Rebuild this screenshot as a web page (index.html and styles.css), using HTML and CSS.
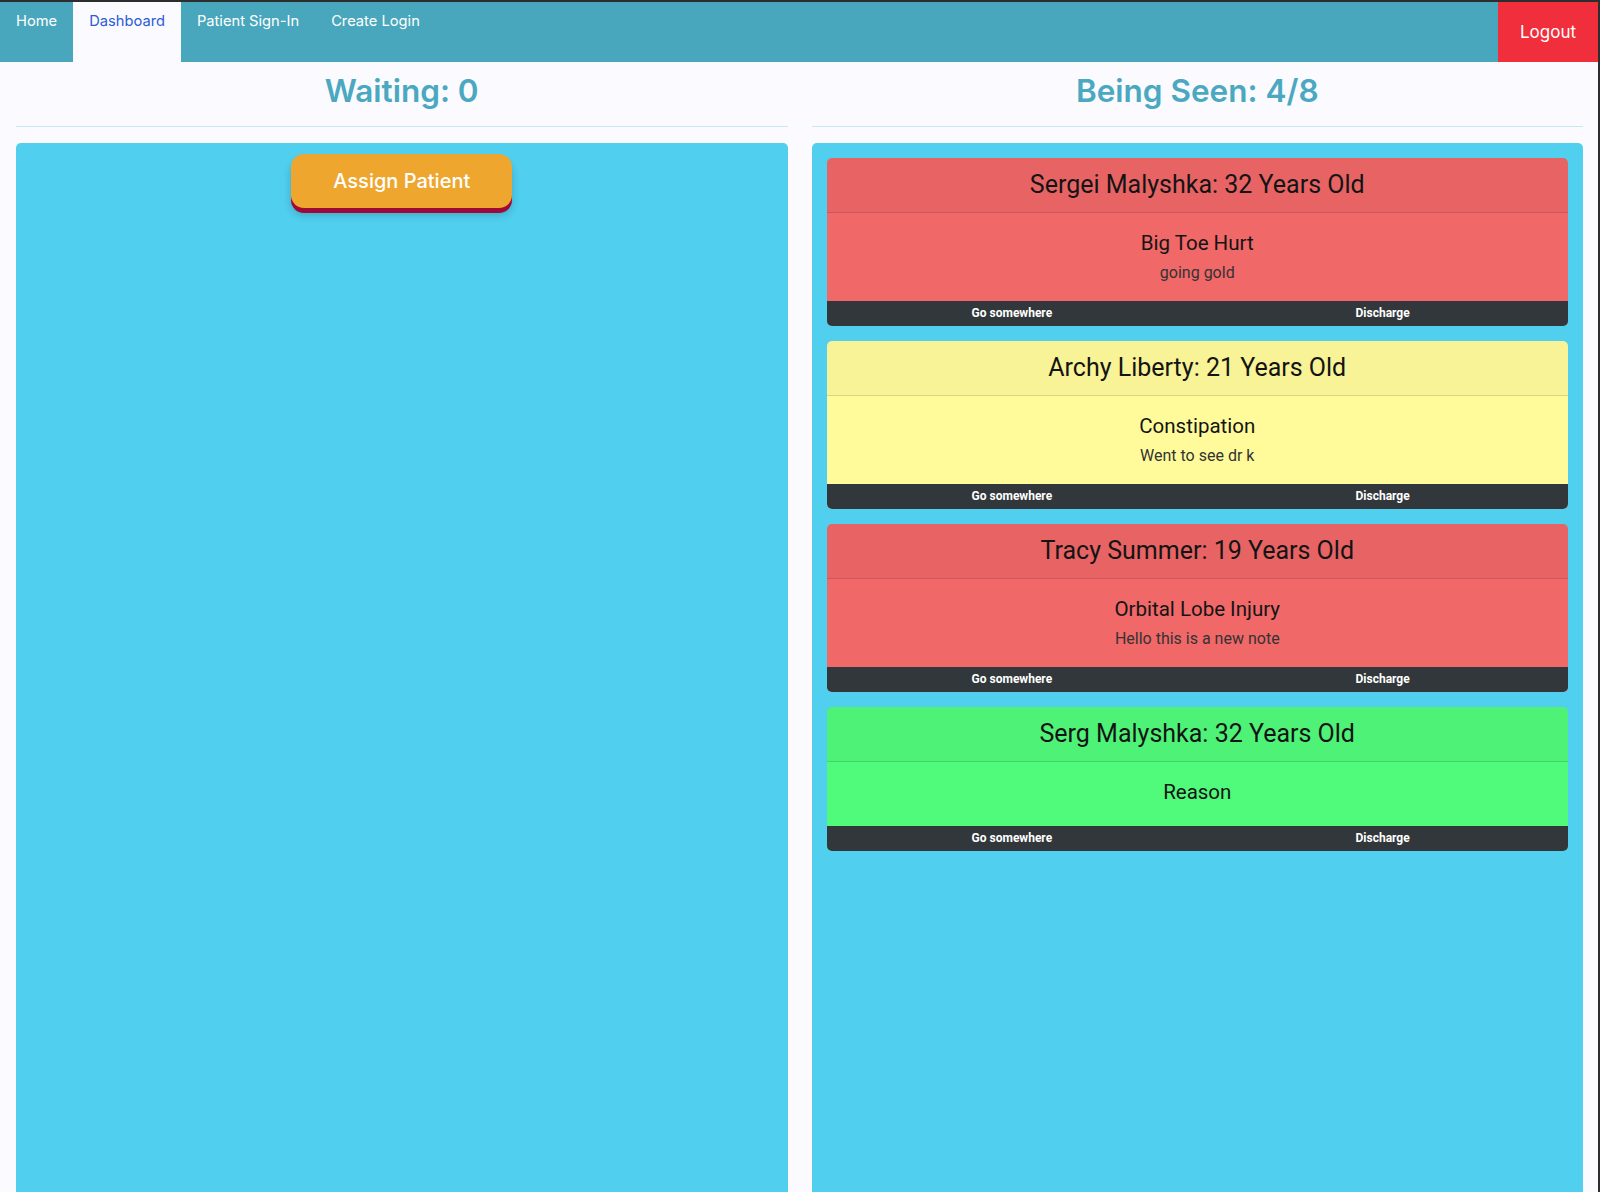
FILE: index.html
```html
<!DOCTYPE html>
<html lang="en">
<head>
<meta charset="utf-8">
<title>Dashboard</title>
<link rel="stylesheet" href="styles.css">
</head>
<body>
<nav class="topnav">
  <div class="nav-links">
    <a class="nav-link" href="#">Home</a>
    <a class="nav-link active" href="#">Dashboard</a>
    <a class="nav-link" href="#">Patient Sign-In</a>
    <a class="nav-link" href="#">Create Login</a>
  </div>
  <a class="logout" href="#">Logout</a>
</nav>
<main class="board">
  <section class="col">
    <h2 class="col-title">Waiting: 0</h2>
    <hr class="col-rule">
    <div class="panel panel-waiting">
      <button class="assign-btn" type="button">Assign Patient</button>
    </div>
  </section>
  <section class="col">
    <h2 class="col-title">Being Seen: 4/8</h2>
    <hr class="col-rule">
    <div class="panel panel-seen">
      <div class="card card-red">
        <div class="card-header">Sergei Malyshka: 32 Years Old</div>
        <div class="card-body">
          <h5 class="card-title">Big Toe Hurt</h5>
          <p class="card-text">going gold</p>
        </div>
        <div class="card-footer"><a href="#">Go somewhere</a><a href="#">Discharge</a></div>
      </div>
      <div class="card card-yellow">
        <div class="card-header">Archy Liberty: 21 Years Old</div>
        <div class="card-body">
          <h5 class="card-title">Constipation</h5>
          <p class="card-text">Went to see dr k</p>
        </div>
        <div class="card-footer"><a href="#">Go somewhere</a><a href="#">Discharge</a></div>
      </div>
      <div class="card card-red">
        <div class="card-header">Tracy Summer: 19 Years Old</div>
        <div class="card-body">
          <h5 class="card-title">Orbital Lobe Injury</h5>
          <p class="card-text">Hello this is a new note</p>
        </div>
        <div class="card-footer"><a href="#">Go somewhere</a><a href="#">Discharge</a></div>
      </div>
      <div class="card card-green">
        <div class="card-header">Serg Malyshka: 32 Years Old</div>
        <div class="card-body">
          <h5 class="card-title">Reason</h5>
        </div>
        <div class="card-footer"><a href="#">Go somewhere</a><a href="#">Discharge</a></div>
      </div>
    </div>
  </section>
</main>
</body>
</html>
```
FILE: styles.css
```css
* { box-sizing: border-box; }

html, body { margin: 0; padding: 0; }

body {
  height: 100vh;
  display: flex;
  flex-direction: column;
  background: #fafaff;
  border-top: 2px solid #2b2d2f;
  border-right: 2px solid #2b2d2f;
  font-family: Inter, "Noto Sans", sans-serif;
  overflow: hidden;
}

.topnav {
  height: 60px;
  flex: none;
  display: flex;
  justify-content: space-between;
  background: #49a7bd;
}

.nav-links { display: flex; }

.nav-link {
  display: block;
  height: 60px;
  padding: 10px 16px 0;
  font-size: 14.7px;
  line-height: 18px;
  color: #ffffff;
  text-decoration: none;
}

.nav-link.active {
  background: #fafaff;
  color: #2b5bd6;
}

.logout {
  width: 100px;
  display: flex;
  align-items: center;
  justify-content: center;
  background: #f12e3c;
  color: #ffffff;
  font-size: 17px;
  text-decoration: none;
}

.board {
  flex: 1;
  display: flex;
  gap: 24px;
  padding: 0 15px 0 16px;
  min-height: 0;
}

.col {
  flex: 1;
  min-width: 0;
  display: flex;
  flex-direction: column;
}

.col-title {
  margin: 10px 0 16px;
  font-size: 31.5px;
  line-height: 38px;
  font-weight: 600;
  color: #4aa8c0;
  text-align: center;
}

.col-rule {
  margin: 0 0 16px;
  border: 0;
  border-top: 1px solid #c6e8ee;
}

.panel {
  flex: 1;
  background: #50cfef;
  border-radius: 5px 5px 0 0;
  padding: 15px 15px 0;
}

.panel-waiting { padding-top: 11px; }

.panel-seen {
  display: flex;
  flex-direction: column;
  gap: 15px;
}

.assign-btn {
  display: block;
  margin: 0 auto;
  padding: 15px 42px 14px;
  border: 0;
  border-radius: 13px;
  background: #eea62e;
  color: #ffffff;
  font-family: Inter, "Noto Sans", sans-serif;
  font-size: 20px;
  line-height: 25px;
  font-weight: 500;
  box-shadow: 0 5px 0 #a1083a, 0 7px 8px rgba(0, 0, 0, 0.2);
}

.card {
  border-radius: 5px;
  overflow: hidden;
  font-family: Roboto, "Noto Sans", sans-serif;
  color: #141414;
  text-align: center;
}

.card-red { background: #f06868; }
.card-yellow { background: #fffb9b; }
.card-green { background: #50fa7b; }

.card-header {
  padding: 12px 20px;
  font-size: 25px;
  line-height: 30px;
  background: rgba(0, 0, 0, 0.03);
  border-bottom: 1px solid rgba(0, 0, 0, 0.12);
}

.card-body {
  padding: 18px 20px 16px;
}

.card-title {
  margin: 0 0 6px;
  font-size: 20.5px;
  line-height: 24px;
  font-weight: 400;
}

.card-text {
  margin: 0;
  font-size: 16px;
  line-height: 24px;
  color: #333333;
}

.card-footer {
  display: grid;
  grid-template-columns: 1fr 1fr;
  background: #32373b;
  height: 25px;
}

.card-footer a {
  color: #ffffff;
  font-size: 12px;
  line-height: 25px;
  font-weight: 700;
  text-decoration: none;
}
```
